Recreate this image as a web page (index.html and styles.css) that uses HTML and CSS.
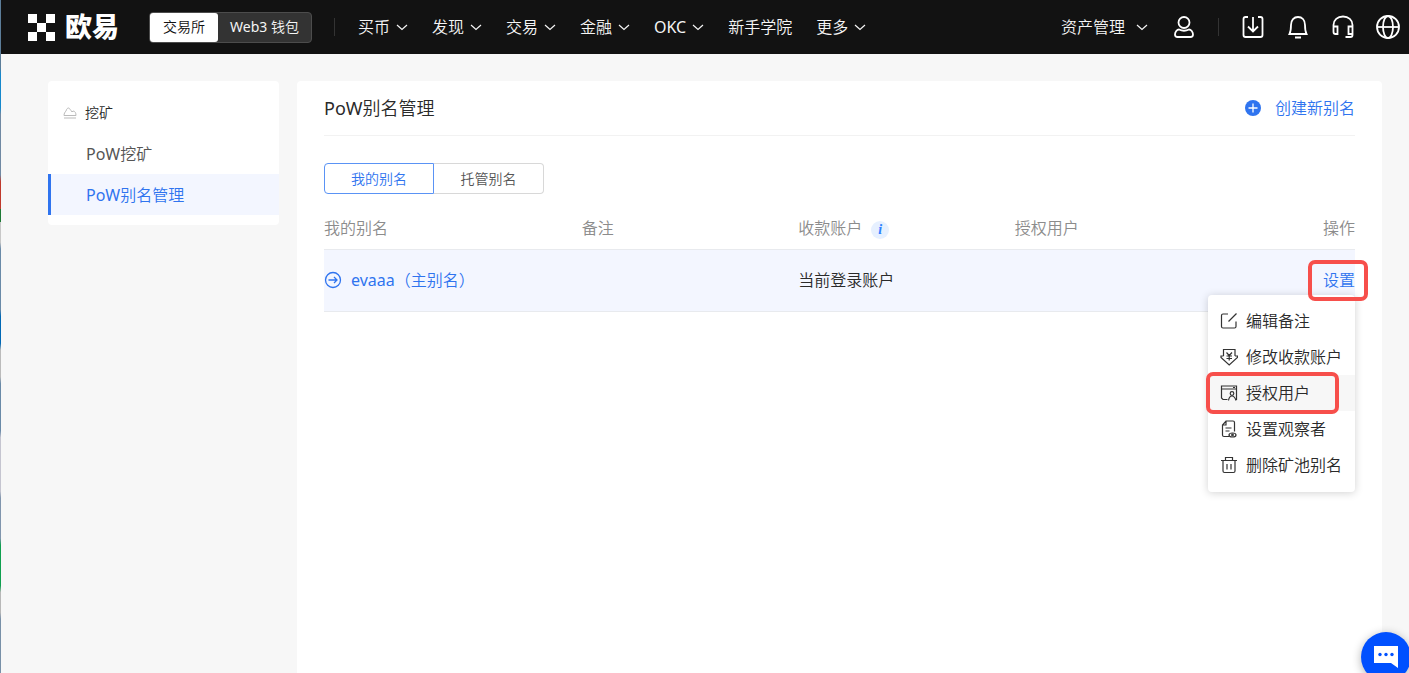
FILE: index.html
```html
<!DOCTYPE html>
<html lang="zh-CN">
<head>
<meta charset="utf-8">
<meta name="viewport" content="width=device-width, initial-scale=1">
<title>PoW别名管理</title>
<link rel="stylesheet" href="styles.css">
</head>
<body>
<svg class="defs" aria-hidden="true">
  <symbol id="chevron" viewBox="0 0 12 12"><path d="M1 4 L6 8.500 L11 4" fill="none" stroke="currentColor" stroke-width="1.200"/></symbol>
</svg>
<div class="edge"></div>
<header class="header">
  <a class="logo" href="#">
    <svg class="logo-mark" viewBox="0 0 27 27" aria-hidden="true"><path d="M0 0h9v9H0zM18 0h9v9h-9zM9 9h9v9H9zM0 18h9v9H0zM18 18h9v9h-9z" fill="#fff"/></svg>
    <span>欧易</span>
  </a>
  <div class="switch">
    <button class="switch-item switch-on" type="button">交易所</button>
    <button class="switch-item" type="button"><span class="latin">Web3</span> 钱包</button>
  </div>
  <span class="divider"></span>
  <nav class="nav">
    <a href="#">买币<svg class="chev"><use href="#chevron"/></svg></a>
    <a href="#">发现<svg class="chev"><use href="#chevron"/></svg></a>
    <a href="#">交易<svg class="chev"><use href="#chevron"/></svg></a>
    <a href="#">金融<svg class="chev"><use href="#chevron"/></svg></a>
    <a href="#"><span class="latin">OKC</span><svg class="chev"><use href="#chevron"/></svg></a>
    <a href="#">新手学院</a>
    <a href="#">更多<svg class="chev"><use href="#chevron"/></svg></a>
  </nav>
  <div class="tools">
    <a class="assets" href="#">资产管理<svg class="chev"><use href="#chevron"/></svg></a>
    <button class="tool" type="button" aria-label="用户"><svg viewBox="0 0 24 24"><circle cx="12" cy="7.500" r="5.500"/><path d="M7 14.500c3 1.500 7 1.500 10 0c2 0 4 2.500 4 5c0 1.500-1 2.500-2.500 2.500h-13C4 22 3 21 3 19.500c0-2.500 2-5 4-5z"/></svg></button>
    <span class="divider"></span>
    <div class="tool-group">
      <button class="tool" type="button" aria-label="下载"><svg viewBox="0 0 24 24"><path d="M7 2H4.500Q2.500 2 2.500 4v16q0 2 2 2h15q2 0 2-2V4q0-2-2-2H17M12 2v14M7 11.500l5 5l5-5"/></svg></button>
      <button class="tool" type="button" aria-label="通知"><svg viewBox="0 0 24 24"><path d="M3.500 19c1-2 1.500-4 1.500-9c0-5 3-8 7-8s7 3 7 8c0 5 .5 7 1.500 9zM9 22.500h6"/></svg></button>
      <button class="tool" type="button" aria-label="客服"><svg viewBox="0 0 24 24"><path d="M2.500 12v-2c0-5 4-8.500 9.500-8.500s9.500 3.500 9.500 8.500v8M2.500 11.500h4V19h-2q-2 0-2-2zM21.500 11.500h-4V19h4zM21.500 18v2q0 2-2 2h-5"/></svg></button>
      <button class="tool" type="button" aria-label="语言"><svg viewBox="0 0 24 24"><circle cx="12" cy="12" r="11"/><ellipse cx="12" cy="12" rx="5" ry="11"/><path d="M1 12h22"/></svg></button>
    </div>
  </div>
</header>
<div class="page">
  <aside class="side">
    <div class="side-group">
      <svg class="side-icon" viewBox="0 0 14 12" aria-hidden="true"><path d="M1 8.500C1 6.500 2 5 3 4C3.500 2 4.500 1 5.500 1C6.500 1 7 2.500 8 3.500L9 5L10 4C12 4 13 6 13 8.500zM1 11h12"/></svg>
      <span>挖矿</span>
    </div>
    <a class="side-link" href="#"><span class="latin">PoW</span>挖矿</a>
    <a class="side-link side-active" href="#"><span class="latin">PoW</span>别名管理</a>
  </aside>
  <main class="main">
    <div class="title-row">
      <h1><span class="latin">PoW</span>别名管理</h1>
      <a class="create" href="#">
        <svg viewBox="0 0 16 16" aria-hidden="true"><circle cx="8" cy="8" r="8" fill="#2f74ef"/><path d="M3.500 8h9M8 3.500v9" stroke="#fff" stroke-width="1.300"/></svg>
        创建新别名
      </a>
    </div>
    <div class="tabs">
      <button class="tab tab-on" type="button">我的别名</button>
      <button class="tab" type="button">托管别名</button>
    </div>
    <table class="table">
      <thead>
        <tr>
          <th class="c-name">我的别名</th>
          <th class="c-note">备注</th>
          <th class="c-account"><span class="with-tip">收款账户<span class="tip">i</span></span></th>
          <th class="c-user">授权用户</th>
          <th class="c-action">操作</th>
        </tr>
      </thead>
      <tbody>
        <tr>
          <td><a class="alias" href="#"><svg viewBox="0 0 18 18" aria-hidden="true"><circle cx="9" cy="9" r="7.500"/><path d="M4.500 9h8.500M10 6l3 3l-3 3"/></svg><span><span class="latin">evaaa</span>（主别名）</span></a></td>
          <td></td>
          <td>当前登录账户</td>
          <td></td>
          <td class="c-action">
            <div class="action">
              <button class="set marked" type="button">设置</button>
              <div class="menu">
                <button class="menu-item" type="button"><svg viewBox="0 0 18 18"><path d="M8 2H3Q1.500 2 1.500 3.500v11Q1.500 16 3 16h11.500q1.500 0 1.500-1.500V9.500M8.500 9.500L16.500 1.500"/></svg>编辑备注</button>
                <button class="menu-item" type="button"><svg viewBox="0 0 18 18"><path d="M3.500 8V1.500h11.500V8M3.500 8H1v1.500l8.200 7.500L17.500 9.500V8H15M6.500 4.500L9.200 7.500L12 4.500M9.200 7.500v5M6.500 8h5.500M6.500 10.500h5.500"/></svg>修改收款账户</button>
                <button class="menu-item menu-hover marked" type="button"><svg viewBox="0 0 18 18"><path d="M7.500 15.500H3L1.500 14V2h15v14M1.500 5h15M13 3.500h2"/><circle cx="12" cy="9.500" r="1.800"/><path d="M8.500 16.500c.5-3 1.500-4.500 3.500-4.500s3 1.500 4 4.500"/></svg>授权用户</button>
                <button class="menu-item" type="button"><svg viewBox="0 0 18 18"><path d="M9 16.500H4Q2.500 16.500 2.500 15V5L6 1h7q1.500 0 1.500 1.500V11.500M6 1v4H2.500M5.500 8h6M5.500 11h4"/><ellipse cx="12.500" cy="15" rx="3.500" ry="2"/><circle cx="12.500" cy="15" r=".8"/></svg>设置观察者</button>
                <button class="menu-item" type="button"><svg viewBox="0 0 18 18"><path d="M1 4.500h16M5.500 4.500V1.500h7v3M3 4.500V15q0 1.500 1.500 1.500h9Q15 16.500 15 15V4.500M7 8v5.500M11 8v5.500"/></svg>删除矿池别名</button>
              </div>
            </div>
          </td>
        </tr>
      </tbody>
    </table>
  </main>
</div>
<button class="chat" type="button" aria-label="在线客服"><svg viewBox="0 0 24 22"><path d="M0 0h24v22l-7-5H0z" fill="#fff"/><g fill="#0050ff"><circle cx="6" cy="8.500" r="1.700"/><circle cx="12" cy="8.500" r="1.700"/><circle cx="18" cy="8.500" r="1.700"/></g></svg></button>
</body>
</html>
```
FILE: styles.css
```css
* { box-sizing: border-box; }
html, body { height: 100%; }
body {
  margin: 0;
  display: flex;
  flex-direction: column;
  overflow: hidden;
  background: #f7f7f7;
  color: #2a2a2a;
  font: 350 16px/24px "Noto Sans", "Noto Sans CJK SC", sans-serif;
}
a { color: inherit; text-decoration: none; }
button { font: inherit; color: inherit; border: 0; background: none; padding: 0; cursor: pointer; }
svg { display: block; flex: none; }
.latin { font-weight: 400; }
.defs { position: absolute; width: 0; height: 0; }
.edge {
  position: fixed;
  left: 0; top: 0; bottom: 0;
  width: 1px;
  z-index: 5;
  background: linear-gradient(#5c7d99 0 10%, #1688cc 11% 16%, #7089a3 17% 26%, #c0392b 27% 31%, #1e7a35 31% 33%, #c8c8c8 33% 36%, #6a8aa8 37% 46%, #0068b5 47% 51%, #bbb 52% 56%, #6a8aa8 57% 64%, #c5c5d0 65% 73%, #8095ad 74% 80%, #10a050 81% 87%, #b8b8b8 88% 91%, #7890a8 92%);
}

.header {
  display: flex;
  align-items: center;
  flex: none;
  height: 54px;
  margin-left: 1px;
  padding: 0 9px 0 27px;
  background: #121212;
  color: #f5f5f5;
}
.logo { display: flex; align-items: center; gap: 10px; color: #fff; font-size: 27px; font-weight: 900; }
.logo-mark { width: 27px; height: 27px; }
.switch {
  display: flex;
  margin-left: 30px;
  border: 1px solid #4c4c4c;
  border-radius: 4px;
  background: #333;
  font-size: 14px;
}
.switch-item { height: 29px; padding: 0 13px; }
.switch-on { border-radius: 3px; background: #fff; color: #121212; }
.switch-on + .switch-item { padding: 0 12px; }
.divider { width: 1px; height: 18px; background: #333; }
.header > .divider { margin-left: 22px; }
.nav { display: flex; gap: 24px; margin-left: 23px; }
.nav a, .assets { display: flex; align-items: center; gap: 6px; white-space: nowrap; }
.assets { gap: 11px; }
.chev { width: 12px; height: 12px; }
.tools { display: flex; align-items: center; margin-left: auto; }
.tool svg { width: 24px; height: 24px; fill: none; stroke: #fff; stroke-width: 1.8; }
.assets + .tool { margin: 0 22px 0 24px; }
.tool-group { display: flex; gap: 21px; margin-left: 22px; }

.page { flex: 1; display: flex; align-items: stretch; gap: 18px; padding: 27px 27px 0 48px; }
.side { width: 231px; align-self: flex-start; padding: 11px 0 10px; border-radius: 4px; background: #fff; }
.side-group { display: flex; align-items: center; gap: 8px; height: 41px; padding-left: 15px; font-size: 14px; }
.side-icon { width: 14px; height: 12px; fill: none; stroke: #bbb; }
.side-link { display: flex; align-items: center; height: 41px; padding-left: 38px; color: #555; }
.side-active { padding-left: 35px; border-left: 3px solid #2f74ef; background: #f3f6ff; color: #2f74ef; }

.main { flex: 1; padding: 0 27px; border-radius: 4px 4px 0 0; background: #fff; }
.title-row { display: flex; align-items: center; justify-content: space-between; height: 55px; border-bottom: 1px solid #f2f2f2; }
h1 { margin: 0; font-size: 18px; font-weight: inherit; }
.create { display: flex; align-items: center; gap: 14px; color: #2f74ef; }
.create svg { width: 16px; height: 16px; }
.tabs { display: flex; margin-top: 27px; font-size: 14px; color: #555; }
.tab { width: 110px; height: 31px; border: 1px solid #d8d8d8; border-left: 0; border-radius: 0 4px 4px 0; }
.tab-on { border: 1px solid #5a93f5; border-radius: 4px 0 0 4px; color: #2f74ef; }

.table { width: 100%; margin-top: 14px; border-collapse: collapse; table-layout: fixed; }
.table th, .table td { padding: 0; text-align: left; font-weight: inherit; border-bottom: 1px solid #e8eaee; }
.table th { height: 41px; color: #8c8c8c; }
.table td { height: 62px; background: #f3f6ff; }
.table .c-action { text-align: right; }
.c-name { width: 25%; }
.c-note, .c-account, .c-user { width: 21%; }
.with-tip { display: flex; align-items: center; gap: 9px; }
.tip {
  width: 18px; height: 18px;
  margin-top: 3px;
  border-radius: 50%;
  background: #e6f0ff;
  color: #2f80ff;
  font: italic bold 14px/18px "Liberation Serif", serif;
  text-align: center;
}
.alias { display: flex; align-items: center; gap: 9px; color: #2f74ef; }
.alias svg { width: 18px; height: 18px; fill: none; stroke: currentColor; stroke-width: 1.3; }
.action { position: relative; }
.set { color: #2f74ef; }
.marked { position: relative; }
.marked::after {
  content: "";
  position: absolute;
  z-index: 3;
  inset: -8px -13px -9px -15px;
  border: 4px solid #f74f4b;
  border-radius: 7px;
}
.menu {
  position: absolute;
  z-index: 2;
  top: 27px;
  right: 0;
  width: 147px;
  padding: 8px 0 9px;
  border-radius: 4px;
  background: #fff;
  box-shadow: 0 1px 8px rgba(0, 0, 0, .18);
}
.set.marked { z-index: 3; }
.menu-item { display: flex; align-items: center; gap: 8px; width: 100%; height: 36px; padding-left: 12px; white-space: nowrap; }
.menu-item svg { width: 18px; height: 18px; fill: none; stroke: #333; stroke-width: 1.2; }
.menu-hover { background: #f7f7f7; }
.menu-hover.marked::after { inset: -3px 16px -3px -2px; }

.chat {
  position: fixed;
  z-index: 4;
  right: -2px;
  bottom: -9px;
  display: flex;
  align-items: center;
  justify-content: center;
  width: 50px;
  height: 50px;
  border-radius: 50%;
  background: #0050ff;
  box-shadow: 0 2px 10px rgba(0, 0, 0, .3);
}
.chat svg { width: 24px; height: 22px; }
```
